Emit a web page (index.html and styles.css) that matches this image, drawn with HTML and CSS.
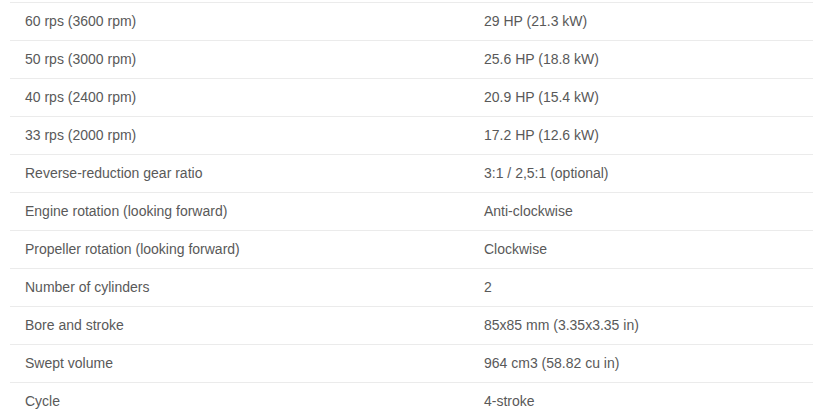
FILE: index.html
```html
<!DOCTYPE html>
<html lang="en">
<head>
<meta charset="utf-8">
<title>Engine specifications</title>
<link rel="stylesheet" href="styles.css">
</head>
<body>
<table class="specs">
  <tbody>
    <tr><td class="label">60 rps (3600 rpm)</td><td class="value">29 HP (21.3 kW)</td></tr>
    <tr><td class="label">50 rps (3000 rpm)</td><td class="value">25.6 HP (18.8 kW)</td></tr>
    <tr><td class="label">40 rps (2400 rpm)</td><td class="value">20.9 HP (15.4 kW)</td></tr>
    <tr><td class="label">33 rps (2000 rpm)</td><td class="value">17.2 HP (12.6 kW)</td></tr>
    <tr><td class="label">Reverse-reduction gear ratio</td><td class="value">3:1 / 2,5:1 (optional)</td></tr>
    <tr><td class="label">Engine rotation (looking forward)</td><td class="value">Anti-clockwise</td></tr>
    <tr><td class="label">Propeller rotation (looking forward)</td><td class="value">Clockwise</td></tr>
    <tr><td class="label">Number of cylinders</td><td class="value">2</td></tr>
    <tr><td class="label">Bore and stroke</td><td class="value">85x85 mm (3.35x3.35 in)</td></tr>
    <tr><td class="label">Swept volume</td><td class="value">964 cm3 (58.82 cu in)</td></tr>
    <tr><td class="label">Cycle</td><td class="value">4-stroke</td></tr>
  </tbody>
</table>
</body>
</html>
```
FILE: styles.css
```css
html, body {
  margin: 0;
  padding: 0;
  background: #ffffff;
}

body {
  padding: 2px 17px 0 10px;
  font-family: "Liberation Sans", Arial, sans-serif;
  font-size: 14px;
  color: #595959;
  overflow: hidden;
}

.specs {
  width: 803px;
  border-collapse: collapse;
  table-layout: fixed;
}

.specs td {
  height: 37px;
  padding: 0 15px 2px;
  border-top: 1px solid #ebebeb;
  vertical-align: middle;
  line-height: 20px;
  white-space: nowrap;
  box-sizing: border-box;
}

.specs tr {
  height: 38px;
}

.specs .label {
  width: 459px;
}
```
